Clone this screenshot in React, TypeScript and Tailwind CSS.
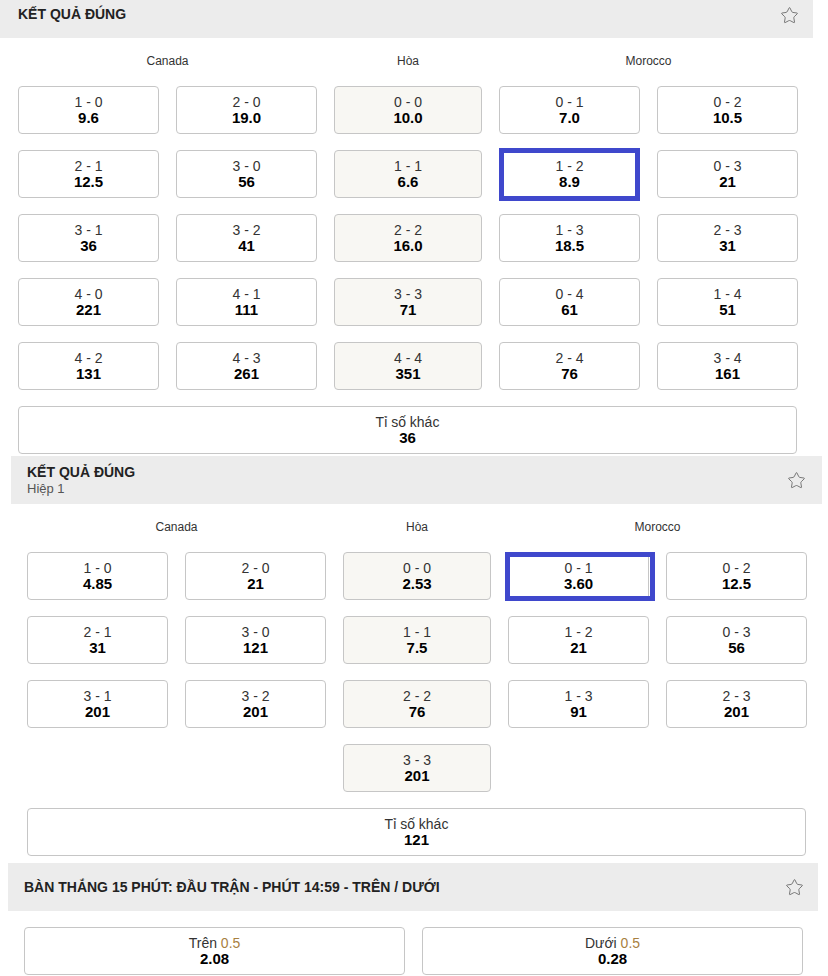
import { Star } from 'lucide-react';

type Cell = { score: string; odds: string; draw?: boolean; mark?: string } | null;

const font = { fontFamily: '"Liberation Sans", Arial, sans-serif' };

function OddsButton({ top, odds, draw, mark, className = '' }: { top: React.ReactNode; odds: string; draw?: boolean; mark?: string; className?: string }) {
  return (
    <div
      className={`relative h-12 rounded-[4px] border border-[#c6c6c6] flex flex-col items-center justify-center ${draw ? 'bg-[#f8f7f3]' : 'bg-white'} ${className}`}
    >
      <div className="text-[14px] leading-4 text-[#333]">{top}</div>
      <div className="text-[15px] leading-4 font-bold text-black">{odds}</div>
      {mark && <div className={`absolute z-10 border-[5px] border-[#3f48cc] ${mark}`} />}
    </div>
  );
}

function Header({ title, subtitle, className }: { title: string; subtitle?: string; className: string }) {
  return (
    <div className={`flex justify-between bg-[#ececec] ${className}`}>
      <div>
        <div className="text-[14px] leading-[17px] font-bold text-[#222]">{title}</div>
        {subtitle && <div className="text-[13px] leading-4 text-[#555]">{subtitle}</div>}
      </div>
      <Star size={19} strokeWidth={1.1} className="text-[#666]" />
    </div>
  );
}

function ScoreGrid({ rows, other }: { rows: Cell[][]; other: string }) {
  return (
    <div>
      <div className="grid grid-cols-[141px_141px_148px_141px_141px] gap-x-[17px] h-4 mb-[17px] text-[12px] leading-4 text-[#333]">
        <div className="col-span-2 text-center">Canada</div>
        <div className="text-center">Hòa</div>
        <div className="col-span-2 text-center">Morocco</div>
      </div>
      <div className="grid grid-cols-[141px_141px_148px_141px_141px] gap-x-[17px] gap-y-4">
        {rows.flatMap((row, r) =>
          row.map((c, i) =>
            c ? (
              <OddsButton key={`${r}-${i}`} top={c.score} odds={c.odds} draw={c.draw} mark={c.mark} />
            ) : (
              <div key={`${r}-${i}`} />
            )
          )
        )}
      </div>
      <OddsButton className="mt-4" top="Tỉ số khác" odds={other} />
    </div>
  );
}

const c = (score: string, odds: string, extra: Partial<{ draw: boolean; mark: string }> = {}) => ({ score, odds, ...extra });

const fullTime: Cell[][] = [
  [c('1 - 0', '9.6'), c('2 - 0', '19.0'), c('0 - 0', '10.0', { draw: true }), c('0 - 1', '7.0'), c('0 - 2', '10.5')],
  [c('2 - 1', '12.5'), c('3 - 0', '56'), c('1 - 1', '6.6', { draw: true }), c('1 - 2', '8.9', { mark: '-left-px -top-[3px] -right-[1px] -bottom-[4px]' }), c('0 - 3', '21')],
  [c('3 - 1', '36'), c('3 - 2', '41'), c('2 - 2', '16.0', { draw: true }), c('1 - 3', '18.5'), c('2 - 3', '31')],
  [c('4 - 0', '221'), c('4 - 1', '111'), c('3 - 3', '71', { draw: true }), c('0 - 4', '61'), c('1 - 4', '51')],
  [c('4 - 2', '131'), c('4 - 3', '261'), c('4 - 4', '351', { draw: true }), c('2 - 4', '76'), c('3 - 4', '161')],
];

const firstHalf: Cell[][] = [
  [c('1 - 0', '4.85'), c('2 - 0', '21'), c('0 - 0', '2.53', { draw: true }), c('0 - 1', '3.60', { mark: '-left-[4px] -top-[1px] -right-[7px] -bottom-[2px]' }), c('0 - 2', '12.5')],
  [c('2 - 1', '31'), c('3 - 0', '121'), c('1 - 1', '7.5', { draw: true }), c('1 - 2', '21'), c('0 - 3', '56')],
  [c('3 - 1', '201'), c('3 - 2', '201'), c('2 - 2', '76', { draw: true }), c('1 - 3', '91'), c('2 - 3', '201')],
  [null, null, c('3 - 3', '201', { draw: true }), null, null],
];

export default function App() {
  return (
    <div className="w-[828px] h-[976px] overflow-hidden bg-white" style={font}>
      <section className="w-[813px]">
        <Header title="KẾT QUẢ ĐÚNG" className="h-[38px] pt-[6px] pl-[18px] pr-[14px]" />
        <div className="pt-[15px] pl-[18px] pr-[16px]">
          <ScoreGrid rows={fullTime} other="36" />
        </div>
      </section>

      <section className="ml-[11px] w-[811px] mt-[2px]">
        <Header title="KẾT QUẢ ĐÚNG" subtitle="Hiệp 1" className="h-12 pl-4 pr-[16px] items-center" />
        <div className="pt-[15px] pl-4 pr-[16px]">
          <ScoreGrid rows={firstHalf} other="121" />
        </div>
      </section>

      <section className="ml-[8px] w-[810px] mt-[7px]">
        <Header
          title="BÀN THẮNG 15 PHÚT: ĐẦU TRẬN - PHÚT 14:59 - TRÊN / DƯỚI"
          className="h-12 pl-4 pr-[14px] items-center"
        />
        <div className="pt-4 pl-4 pr-[15px] grid grid-cols-2 gap-x-[17px]">
          <OddsButton top={<>Trên <span className="text-[#a8803f]">0.5</span></>} odds="2.08" />
          <OddsButton top={<>Dưới <span className="text-[#a8803f]">0.5</span></>} odds="0.28" />
        </div>
      </section>
    </div>
  );
}
